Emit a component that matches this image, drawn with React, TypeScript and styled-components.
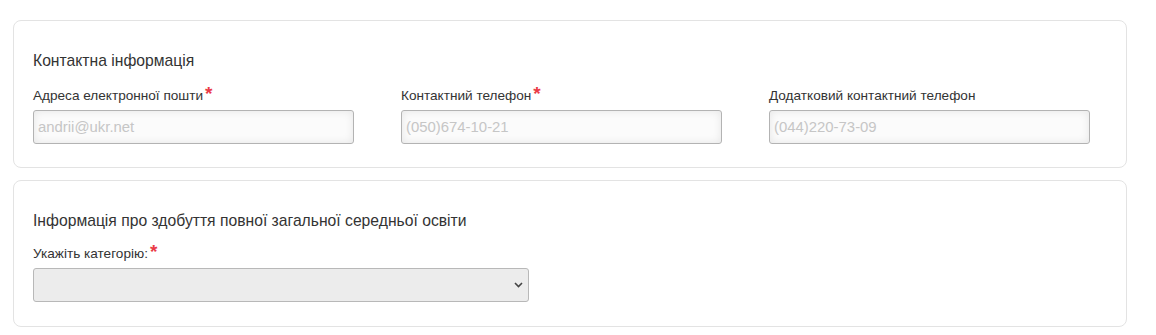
import React from "react";
import styled, { createGlobalStyle } from "styled-components";

const Global = createGlobalStyle`
  html, body { margin: 0; padding: 0; background: #fff; }
  body { font-family: "Liberation Sans", Arial, sans-serif; color: #333; }
  * { box-sizing: border-box; }
`;

const Page = styled.div`
  display: flex;
  flex-direction: column;
  gap: 12px;
  padding: 20px 29px 0 13px;
`;

const Card = styled.section<{ $bottom: number }>`
  border: 1px solid #e3e3e3;
  border-radius: 8px;
  padding: 29px 19px ${(p) => p.$bottom}px;
  display: flex;
  flex-direction: column;
`;

const Title = styled.h3<{ $gap: number }>`
  margin: 0 0 ${(p) => p.$gap}px;
  font-size: 15.7px;
  line-height: 21px;
  font-weight: 400;
  color: #333;
`;

const Row = styled.div`
  display: grid;
  grid-template-columns: repeat(3, 321px);
  column-gap: 47px;
`;

const Field = styled.div<{ $width?: number }>`
  display: flex;
  flex-direction: column;
  gap: 5px;
  width: ${(p) => (p.$width ? `${p.$width}px` : "auto")};
`;

const Label = styled.label`
  font-size: 13.6px;
  line-height: 18px;
  height: 18px;
  color: #333;
  display: flex;
  align-items: flex-start;
`;

const Star = styled.span`
  color: #ea3b47;
  font-size: 19px;
  font-weight: 700;
  line-height: 1;
  margin: -3px 0 0 2px;
`;

const Input = styled.input`
  height: 34px;
  width: 100%;
  border: 1px solid #b3b3b3;
  border-radius: 3px;
  padding: 0 4px;
  font-family: "Liberation Sans", Arial, sans-serif;
  font-size: 14.9px;
  background: #fbfbfb;
  box-shadow: inset 0 0 8px rgba(0, 0, 0, 0.09);
  outline: none;
  &::placeholder { color: #c6c6c6; }
`;

const SelectWrap = styled.div`
  position: relative;
  height: 34px;
  width: 100%;
`;

const Select = styled.select`
  appearance: none;
  width: 100%;
  height: 34px;
  border: 1px solid #b8b8b8;
  border-radius: 3px;
  background: #ececec;
  font-family: "Liberation Sans", Arial, sans-serif;
  font-size: 14px;
  outline: none;
`;

const Chevron = styled.svg`
  position: absolute;
  right: 6px;
  top: 14px;
  width: 9px;
  height: 6px;
  pointer-events: none;
`;

export default function App() {
  return (
    <>
      <Global />
      <Page>
        <Card $bottom={23}>
          <Title $gap={16}>Контактна інформація</Title>
          <Row>
            <Field>
              <Label>
                Адреса електронної пошти<Star>*</Star>
              </Label>
              <Input placeholder="andrii@ukr.net" />
            </Field>
            <Field>
              <Label>
                Контактний телефон<Star>*</Star>
              </Label>
              <Input placeholder="(050)674-10-21" />
            </Field>
            <Field>
              <Label>Додатковий контактний телефон</Label>
              <Input placeholder="(044)220-73-09" />
            </Field>
          </Row>
        </Card>
        <Card $bottom={24}>
          <Title $gap={14}>Інформація про здобуття повної загальної середньої освіти</Title>
          <Field $width={496}>
            <Label>
              Укажіть категорію:<Star>*</Star>
            </Label>
            <SelectWrap>
              <Select defaultValue="">
                <option value=""></option>
              </Select>
              <Chevron viewBox="0 0 9 6">
                <path d="M1 1 L4.5 4.5 L8 1" fill="none" stroke="#444" strokeWidth="1.6" />
              </Chevron>
            </SelectWrap>
          </Field>
        </Card>
      </Page>
    </>
  );
}
